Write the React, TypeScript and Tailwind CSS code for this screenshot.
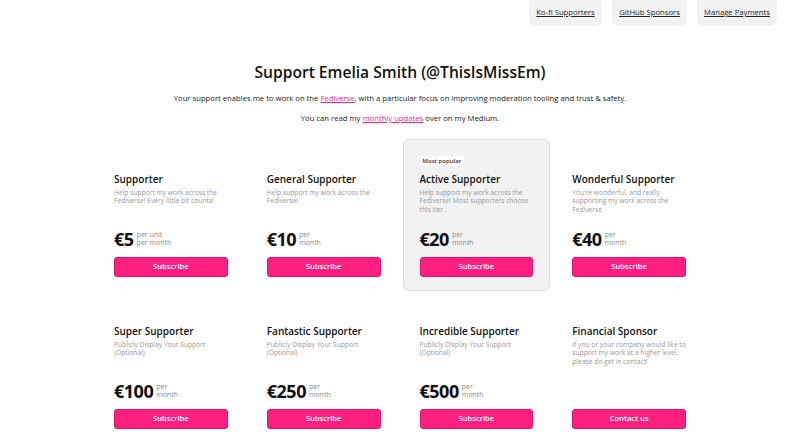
import React from "react";

type Tier = {
  name: string;
  description: string;
  price?: string;
  unit?: [string, string];
  cta: string;
  popular?: boolean;
};

const TIERS: Tier[] = [
  {
    name: "Supporter",
    description: "Help support my work across the Fediverse! Every little bit counts!",
    price: "€5",
    unit: ["per unit", "per month"],
    cta: "Subscribe",
  },
  {
    name: "General Supporter",
    description: "Help support my work across the Fediverse!",
    price: "€10",
    unit: ["per", "month"],
    cta: "Subscribe",
  },
  {
    name: "Active Supporter",
    description: "Help support my work across the Fediverse! Most supporters choose this tier.",
    price: "€20",
    unit: ["per", "month"],
    cta: "Subscribe",
    popular: true,
  },
  {
    name: "Wonderful Supporter",
    description: "You're wonderful, and really supporting my work across the Fediverse.",
    price: "€40",
    unit: ["per", "month"],
    cta: "Subscribe",
  },
  {
    name: "Super Supporter",
    description: "Publicly Display Your Support (Optional)",
    price: "€100",
    unit: ["per", "month"],
    cta: "Subscribe",
  },
  {
    name: "Fantastic Supporter",
    description: "Publicly Display Your Support (Optional)",
    price: "€250",
    unit: ["per", "month"],
    cta: "Subscribe",
  },
  {
    name: "Incredible Supporter",
    description: "Publicly Display Your Support (Optional)",
    price: "€500",
    unit: ["per", "month"],
    cta: "Subscribe",
  },
  {
    name: "Financial Sponsor",
    description:
      "If you or your company would like to support my work at a higher level, please do get in contact!",
    cta: "Contact us",
  },
];

const NAV = ["Ko-fi Supporters", "GitHub Sponsors", "Manage Payments"];

function TierCard({ tier }: { tier: Tier }) {
  return (
    <div
      className={
        "flex h-[152px] flex-col rounded-[6px] border px-[16px] pb-[13px] pt-[16px] " +
        (tier.popular ? "border-[#dcdcdc] bg-[#f2f2f2]" : "border-transparent bg-white")
      }
    >
      <div className="flex h-[10px] items-center">
        {tier.popular && (
          <span className="flex h-[10px] items-center rounded-[2px] bg-white px-[3px] text-[6px] font-semibold leading-none text-[#333]">
            Most popular
          </span>
        )}
      </div>
      <h3 className="mt-[7px] text-[10px] font-semibold leading-[13px] text-[#111]">{tier.name}</h3>
      <p className="mt-[3px] text-[6.7px] leading-[8.3px] text-[#9a9a9a]">{tier.description}</p>
      <div className="flex-1" />
      {tier.price ? (
        <div className="mb-[8px] flex h-[20px] items-center gap-[3px]">
          <span className="text-[18px] font-bold leading-none tracking-[-0.5px] text-[#111]">{tier.price}</span>
          <span className="flex flex-col text-[7px] leading-[8px] text-[#8a8a8a]">
            <span>{tier.unit?.[0]}</span>
            <span>{tier.unit?.[1]}</span>
          </span>
        </div>
      ) : null}
      <button className="h-[20px] w-full rounded-[3px] border border-[#ea0d6e] bg-[#ff1f7f] text-[7.6px] font-semibold leading-none text-white">
        {tier.cta}
      </button>
    </div>
  );
}

export default function App() {
  return (
    <div
      className="min-h-screen bg-white text-[#1a1a1a]"
      style={{ fontFamily: '"Open Sans", "Noto Sans", sans-serif' }}
    >
      <nav className="flex justify-end gap-[10px] pr-[23px]">
        {NAV.map((n, i) => (
          <a
            key={n}
            href="#"
            className={
              "flex h-[26px] items-center justify-center rounded-b-[7px] bg-[#f2f2f2] text-[7.7px] leading-none text-[#222] underline " +
              (i === 0 ? "w-[73px]" : i === 1 ? "w-[75px]" : "w-[80px]")
            }
          >
            {n}
          </a>
        ))}
      </nav>

      <main className="flex flex-col items-center">
        <h1 className="mt-[36px] text-[15.6px] font-semibold leading-[20px] text-[#111]">
          Support Emelia Smith (@ThisIsMissEm)
        </h1>
        <p className="mt-[11px] text-[7.7px] leading-[10px]">
          Your support enables me to work on the{" "}
          <a href="#" className="text-[#ff1f7f] underline">
            Fediverse
          </a>
          , with a particular focus on improving moderation tooling and trust &amp; safety.
        </p>
        <p className="mt-[10px] text-[7.7px] leading-[10px]">
          You can read my{" "}
          <a href="#" className="text-[#ff1f7f] underline">
            monthly updates
          </a>{" "}
          over on my Medium.
        </p>

        <div className="mt-[16px] grid w-[606px] grid-cols-4 gap-x-[5px] gap-y-0">
          {TIERS.map((t) => (
            <TierCard key={t.name} tier={t} />
          ))}
        </div>
      </main>
    </div>
  );
}
